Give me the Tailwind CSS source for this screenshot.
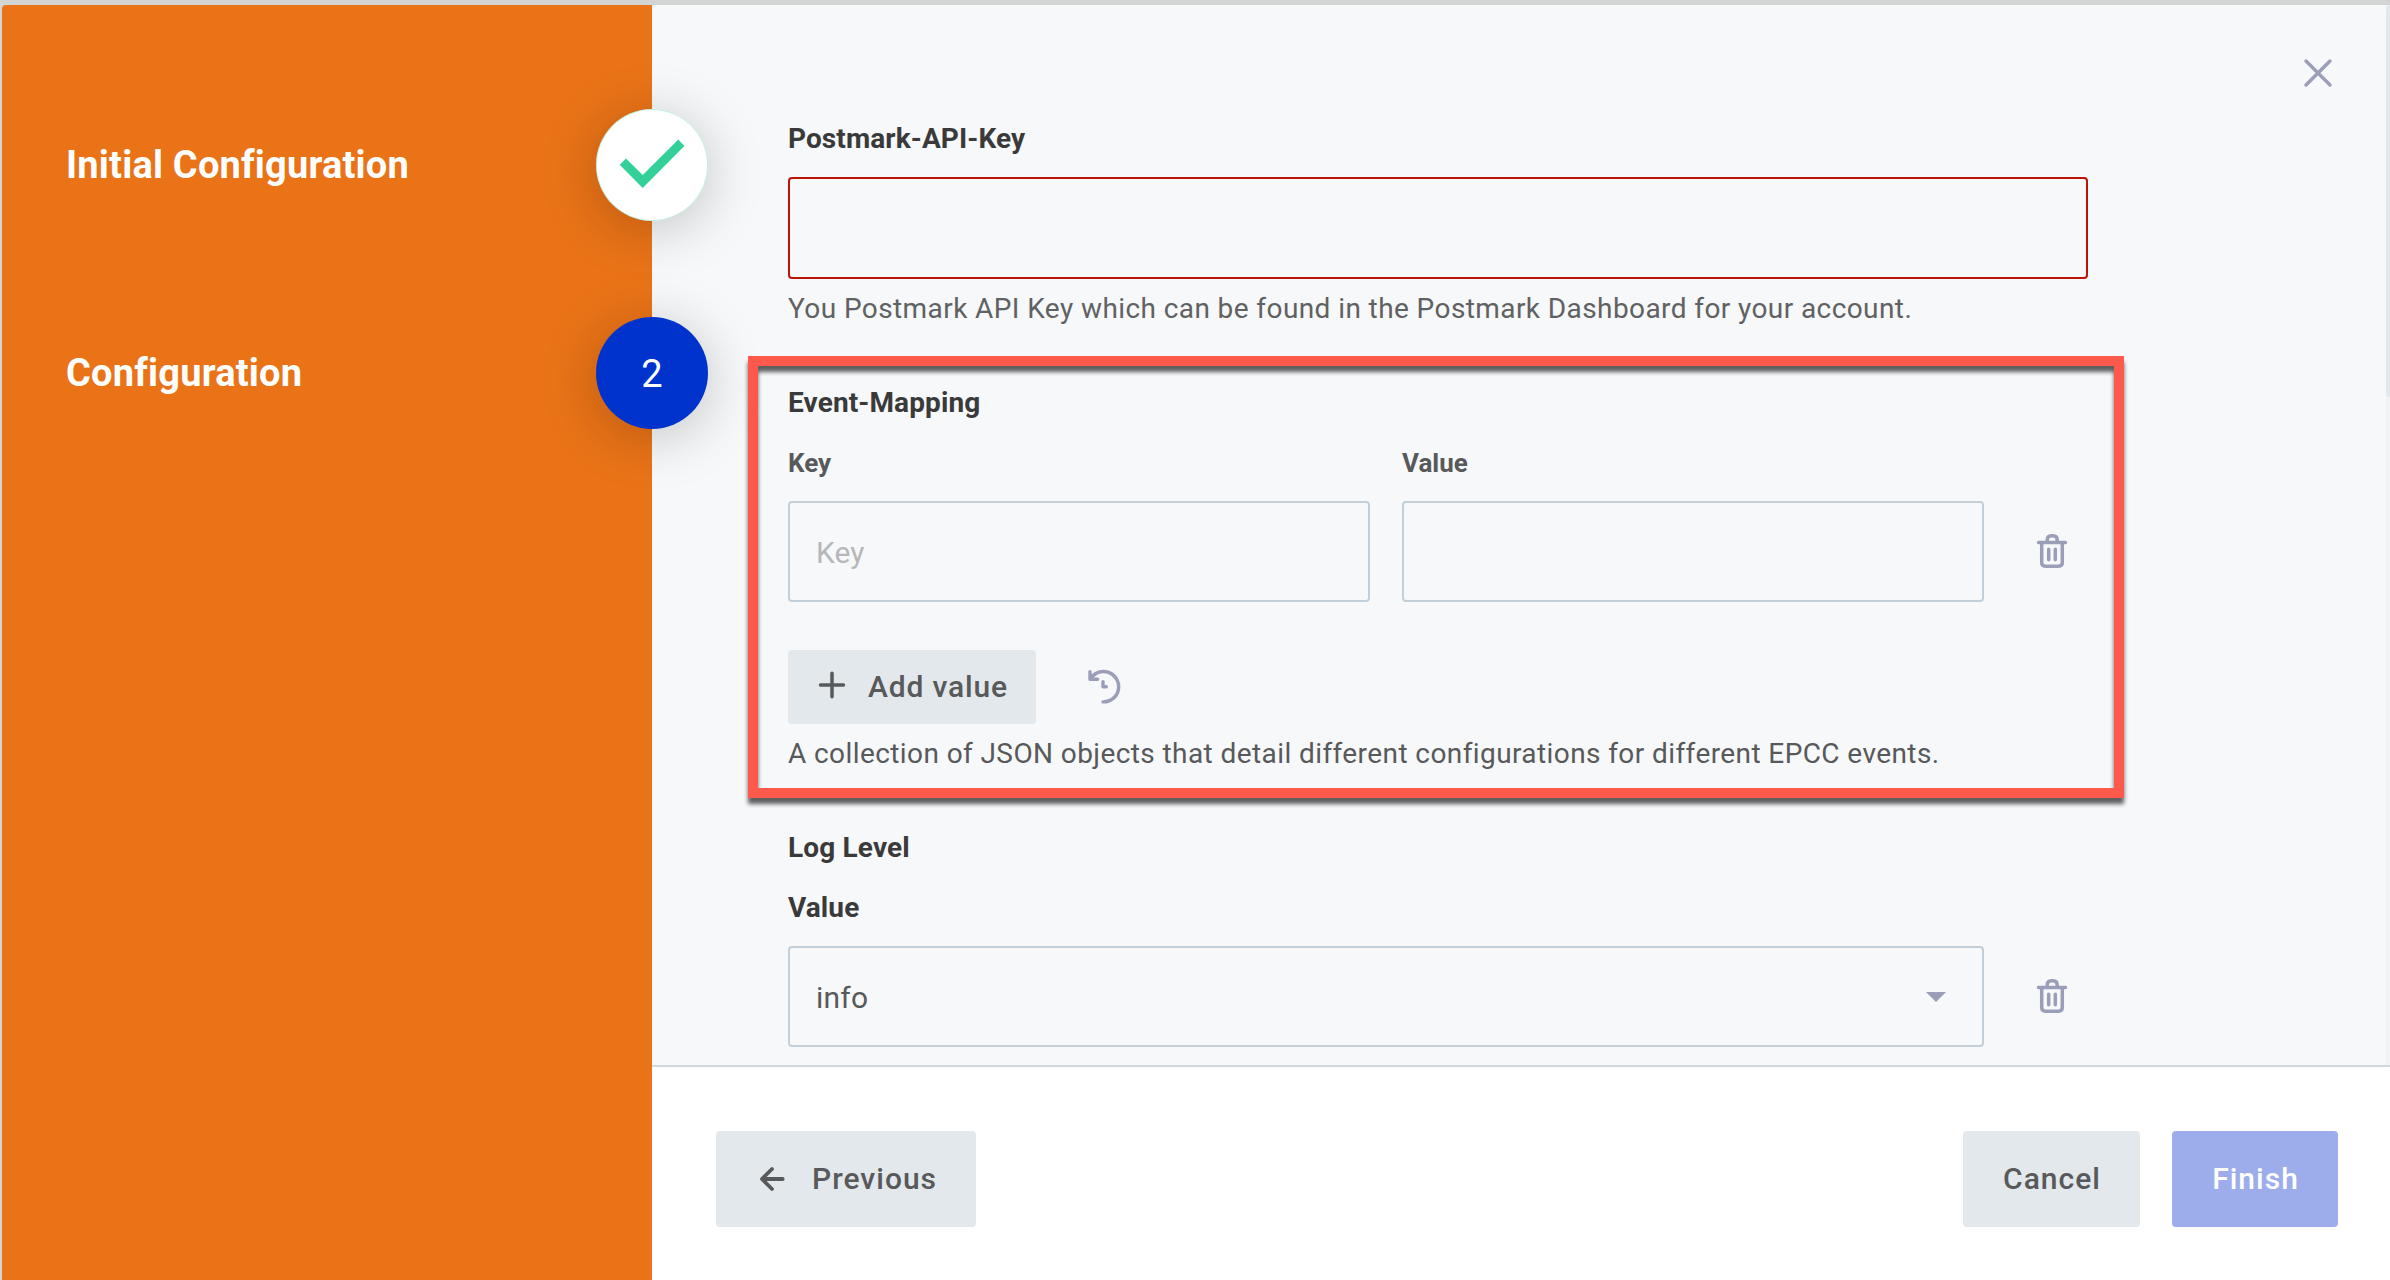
<!DOCTYPE html>
<html lang="en">
<head>
<meta charset="utf-8">
<title>Configuration</title>
<script src="https://cdn.jsdelivr.net/npm/@tailwindcss/browser@4"></script>
</head>
<body class="w-[2390px] h-[1280px] overflow-hidden bg-[#d3d4d4] font-['Roboto',sans-serif] text-[#58595a]">
<div class="flex h-full pt-[5px] pl-[2px]">
  <!-- Steps -->
  <aside class="relative z-10 w-[650px] shrink-0 rounded-tl-[4px] bg-[#ea7317] pt-[104px] text-white">
    <ol class="flex flex-col gap-24">
      <li class="flex h-[112px] items-center justify-between pl-16 -mr-14">
        <span class="text-[38px] font-bold tracking-[0.2px] leading-[46px]">Initial Configuration</span>
        <span class="size-[112px] rounded-full bg-white shadow-[0_8px_56px_rgba(0,0,0,0.22)]">
          <svg class="size-[112px]" viewBox="0 0 112 112" fill="none"><circle cx="56" cy="56" r="55.7" stroke="#33d199" stroke-opacity=".5" stroke-width=".6"/><path fill="#33d199" d="M23.7 55.7 30 49.5 46.7 66 82.3 30.6 88.4 37 46.7 79Z"/></svg>
        </span>
      </li>
      <li class="flex h-[112px] items-center justify-between pl-16 -mr-14">
        <span class="text-[38px] font-bold tracking-[0.2px] leading-[46px]">Configuration</span>
        <span class="flex size-[112px] items-center justify-center rounded-full bg-[#0033cc] pt-0.5 text-[38px] shadow-[0_8px_56px_rgba(0,0,0,0.22)]">2</span>
      </li>
    </ol>
  </aside>

  <div class="flex min-w-0 flex-1 flex-col">
    <main class="relative h-[1060px] bg-[#f7f8fa] pl-[136px] pt-[118px]">
      <!-- Close -->
      <svg class="absolute left-[1650px] top-[52px] size-8" viewBox="0 0 32 32" fill="none" stroke="#9b9eb8" stroke-width="3.4" stroke-linecap="round"><path d="M4 4 28 28M28 4 4 28"/></svg>
      <!-- Scrollbar -->
      <div class="absolute right-0 top-0 h-full w-1 bg-[#f2f3f5]"><div class="h-[392px] rounded-l-[4px] bg-[#e2e8ec]"></div></div>

      <section>
        <h2 class="h-8 text-[28px] font-bold leading-8 tracking-[0.1px] text-[#3a3a3a]">Postmark-API-Key</h2>
        <div class="mt-[22px] h-[102px] w-[1300px] rounded-[4px] border-2 border-[#bb1407]"></div>
        <p class="mt-[14px] h-8 whitespace-nowrap text-[28px] leading-8 tracking-[0.41px] text-[#606162]">You Postmark API Key which can be found in the Postmark Dashboard for your account.</p>
      </section>

      <section class="mt-[62px]">
        <h2 class="h-8 text-[28px] font-bold leading-8 tracking-[0.12px] text-[#3a3a3a]">Event-Mapping</h2>
        <div class="mt-[28px] flex items-end gap-8">
          <div>
            <div class="h-8 text-[26px] font-bold leading-8">Key</div>
            <div class="mt-[22px] flex h-[101px] w-[582px] items-center rounded-[4px] border-2 border-[#c3cfd8] px-[26px] pt-0.5 text-[30px] text-[#b6b7b8]">Key</div>
          </div>
          <div>
            <div class="h-8 text-[26px] font-bold leading-8">Value</div>
            <div class="mt-[22px] h-[101px] w-[582px] rounded-[4px] border-2 border-[#c3cfd8]"></div>
          </div>
          <svg class="mb-[33px] ml-[18px] size-9" viewBox="0 0 36 36" fill="none" stroke="#9b9eb8" stroke-width="3.5" stroke-linecap="round"><path d="M4.5 9.6H31.5M13.2 9V7Q13.2 2.7 17.4 2.7H19Q23.2 2.7 23.2 7V9M7.7 10V29.6Q7.7 33.3 11.4 33.3H24.6Q28.3 33.3 28.3 29.6V10M14.7 16.3V26.7M21.3 16.3V26.7"/></svg>
        </div>
        <div class="mt-12 flex h-[74px] items-center">
          <button class="flex h-[74px] w-[248px] items-center rounded-[4px] bg-[#e2e8ec] pl-[30px] pb-0.5 text-[30px] font-medium tracking-[0.85px]">
            <svg class="mb-0.5 mr-[22px] size-7" viewBox="0 0 28 28" fill="none" stroke="#58595a" stroke-width="3.5" stroke-linecap="round"><path d="M14 2.3V25.7M2.5 14H25.5"/></svg>Add value</button>
          <svg class="ml-[49px] size-9" viewBox="0 0 36 36" fill="none" stroke="#9b9eb8" stroke-width="3.4" stroke-linecap="round" stroke-linejoin="round"><path d="M5 2.7V10.3H12.7M5.2 10.3A15.2 15.2 0 1 1 18 32.9M18 12.7V17.8H21.3"/></svg>
        </div>
        <p class="mt-[14px] h-8 whitespace-nowrap text-[28px] leading-8 tracking-[0.41px]">A collection of JSON objects that detail different configurations for different EPCC events.</p>
      </section>

      <section class="mt-[62px]">
        <h2 class="h-8 text-[28px] font-bold leading-8 tracking-[0.15px] text-[#3a3a3a]">Log Level</h2>
        <div class="mt-[28px] h-8 text-[28px] font-bold leading-8 tracking-[0.1px] text-[#3a3a3a]">Value</div>
        <div class="mt-[22px] flex items-center">
          <div class="flex h-[101px] w-[1196px] items-center justify-between rounded-[4px] border-2 border-[#c3cfd8] pl-[26px] pr-9 text-[30px] tracking-[0.2px]"><span class="pt-0.5">info</span>
            <svg class="h-[10px] w-5" viewBox="0 0 20 10"><path fill="#9b9eb8" d="M0 0H20L10 10Z"/></svg>
          </div>
          <svg class="mb-px ml-[50px] size-9" viewBox="0 0 36 36" fill="none" stroke="#9b9eb8" stroke-width="3.5" stroke-linecap="round"><path d="M4.5 9.6H31.5M13.2 9V7Q13.2 2.7 17.4 2.7H19Q23.2 2.7 23.2 7V9M7.7 10V29.6Q7.7 33.3 11.4 33.3H24.6Q28.3 33.3 28.3 29.6V10M14.7 16.3V26.7M21.3 16.3V26.7"/></svg>
        </div>
      </section>

      <!-- Highlight frame over the event mapping section -->
      <div class="absolute left-24 top-[351px] h-[442px] w-[1376px] border-[10px] border-[#ff594c] [filter:drop-shadow(0_6px_2px_rgba(0,0,0,0.62))]"></div>
    </main>

    <footer class="flex flex-1 items-start border-t-2 border-[#cdd8df] bg-white pl-16 pr-[52px] pt-16 text-[30px] font-medium tracking-[1px]">
      <button class="flex h-24 w-[260px] items-center rounded-[4px] bg-[#e2e8ec] pl-[42px] pb-0.5">
        <svg class="mt-0.5 mr-[26px] size-7" viewBox="0 0 28 28" fill="none" stroke="#58595a" stroke-width="3.8" stroke-linecap="round" stroke-linejoin="round"><path d="M24.7 14H4M14 4 4 14 14 24"/></svg>Previous</button>
      <button class="ml-auto h-24 w-[177px] rounded-[4px] bg-[#e2e8ec] pb-0.5 pl-px">Cancel</button>
      <button class="ml-8 h-24 w-[166px] rounded-[4px] bg-[#9daceb] pb-0.5 pl-px text-white">Finish</button>
    </footer>
  </div>
</div>
</body>
</html>
